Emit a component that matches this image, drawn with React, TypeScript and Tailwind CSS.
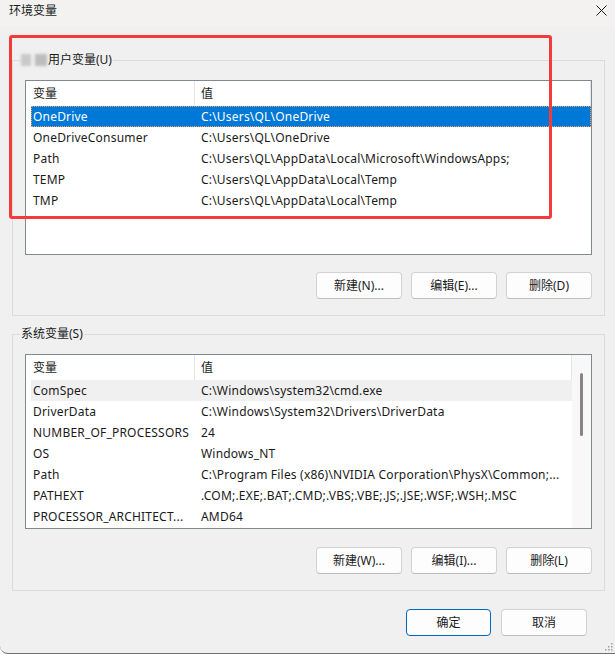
import type { ReactNode } from "react";

const userVars = [
  { name: "OneDrive", value: "C:\\Users\\QL\\OneDrive" },
  { name: "OneDriveConsumer", value: "C:\\Users\\QL\\OneDrive" },
  { name: "Path", value: "C:\\Users\\QL\\AppData\\Local\\Microsoft\\WindowsApps;" },
  { name: "TEMP", value: "C:\\Users\\QL\\AppData\\Local\\Temp" },
  { name: "TMP", value: "C:\\Users\\QL\\AppData\\Local\\Temp" },
];

const systemVars = [
  { name: "ComSpec", value: "C:\\Windows\\system32\\cmd.exe" },
  { name: "DriverData", value: "C:\\Windows\\System32\\Drivers\\DriverData" },
  { name: "NUMBER_OF_PROCESSORS", value: "24" },
  { name: "OS", value: "Windows_NT" },
  { name: "Path", value: "C:\\Program Files (x86)\\NVIDIA Corporation\\PhysX\\Common;..." },
  { name: "PATHEXT", value: ".COM;.EXE;.BAT;.CMD;.VBS;.VBE;.JS;.JSE;.WSF;.WSH;.MSC" },
  { name: "PROCESSOR_ARCHITECT...", value: "AMD64" },
];

const WinButton = ({ children, primary }: { children: ReactNode; primary?: boolean }) => (
  <button
    className={
      primary
        ? "flex h-[27px] w-[85px] items-center justify-center rounded-[4px] border border-[#0067c0] bg-[#fdfdfd] text-[12px] text-[#1a1a1a]"
        : "flex h-[27px] w-[86px] items-center justify-center rounded-[4px] border border-[#d2d2d2] border-b-[#bdbdbd] bg-[#fdfdfd] text-[12px] text-[#1a1a1a]"
    }
  >
    {children}
  </button>
);

type Row = { name: string; value: string };

const VarList = ({
  rows,
  selected,
  hovered,
  scrollbar,
}: {
  rows: Row[];
  selected?: number;
  hovered?: number;
  scrollbar?: boolean;
}) => (
  <div className="flex h-[175px] w-[567px] border border-[#828790] bg-white">
    <div className="flex flex-1 flex-col pl-[5px]">
      <div className="flex h-[25px] shrink-0 items-center">
        <div className="flex h-full w-[164px] items-center border-r border-[#e5e5e5] pl-[2px]">变量</div>
        <div className="flex h-full flex-1 items-center border-r border-[#e5e5e5] pl-[6px]">值</div>
      </div>
      {rows.map((r, i) => {
        const isSel = i === selected;
        const isHover = i === hovered;
        return (
          <div
            key={r.name + i}
            className={
              (isSel
                ? "border-dotted border-[#e8a060] bg-[#0078d7] text-white"
                : isHover
                  ? "border-transparent bg-[#f0f0f0]"
                  : "border-transparent") +
              " flex h-[21px] items-center border tracking-[0.2px] whitespace-nowrap"
            }
          >
            <div className="w-[163px] truncate pl-[1px]">{r.name}</div>
            <div className="flex-1 pl-[6px]">{r.value}</div>
          </div>
        );
      })}
    </div>
    {scrollbar && (
      <div className="flex w-[19px] shrink-0 justify-center bg-[#f8f8f8] pt-[18px]">
        <div className="h-[63px] w-[3px] rounded-full bg-[#858585]" />
      </div>
    )}
  </div>
);

const GroupBox = ({ label, children }: { label: ReactNode; children: ReactNode }) => (
  <fieldset className="mx-[12px] border border-[#dcdcdc] px-[12px] pt-[12px] pb-[16px]">
    <legend className="-ml-[5px] flex items-center px-[1px] leading-[16px]">{label}</legend>
    {children}
  </fieldset>
);

export default function App() {
  return (
    <div
      className="relative h-[654px] w-[615px] overflow-hidden rounded-bl-[8px] border-b border-[#6f6f6f] bg-[#f0f0f0] text-[12px] text-[#1a1a1a]"
      style={{ fontFamily: '"Noto Sans", "Noto Sans CJK SC", sans-serif' }}
    >
      <div className="flex h-[26px] items-start justify-between bg-[#f3f2f1] pt-[4px] pr-[8px] pl-[9px]">
        <span className="leading-[14px]">环境变量</span>
        <svg width="11" height="11" viewBox="0 0 11 11" className="mt-[1px]">
          <path d="M0.5 0.5 L10.5 10.5 M10.5 0.5 L0.5 10.5" stroke="#1a1a1a" strokeWidth="1" />
        </svg>
      </div>

      <div className="mt-[26px]">
        <GroupBox
          label={
            <>
              <span className="mr-[1px] inline-flex gap-[4px] blur-[1.5px]">
                <span className="h-[12px] w-[10px] bg-[#c8c8c8]" />
                <span className="h-[12px] w-[12px] bg-[#bcbcbc]" />
              </span>
              用户变量(U)
            </>
          }
        >
          <VarList rows={userVars} selected={0} />
          <div className="mt-[17px] flex justify-end gap-[9px]">
            <WinButton>新建(N)...</WinButton>
            <WinButton>编辑(E)...</WinButton>
            <WinButton>删除(D)</WinButton>
          </div>
        </GroupBox>
      </div>

      <div className="mt-[10px]">
        <GroupBox label="系统变量(S)">
          <VarList rows={systemVars} hovered={0} scrollbar />
          <div className="mt-[18px] flex justify-end gap-[9px]">
            <WinButton>新建(W)...</WinButton>
            <WinButton>编辑(I)...</WinButton>
            <WinButton>删除(L)</WinButton>
          </div>
        </GroupBox>
      </div>

      <div className="mt-[18px] flex justify-end gap-[10px] pr-[28px]">
        <WinButton primary>确定</WinButton>
        <WinButton>取消</WinButton>
      </div>

      {/* red annotation box */}
      <div className="pointer-events-none absolute top-[35px] left-[9px] h-[184px] w-[543px] rounded-[3px] border-[3px] border-[#f23b3b]" />

      {/* resize grip */}
      <svg width="10" height="10" viewBox="0 0 10 10" className="absolute right-[2px] bottom-[2px]">
        {[
          [8, 2],
          [5, 5],
          [8, 5],
          [2, 8],
          [5, 8],
          [8, 8],
        ].map(([x, y]) => (
          <rect key={`${x}-${y}`} x={x} y={y} width="1.5" height="1.5" fill="#a0a0a0" />
        ))}
      </svg>
    </div>
  );
}
